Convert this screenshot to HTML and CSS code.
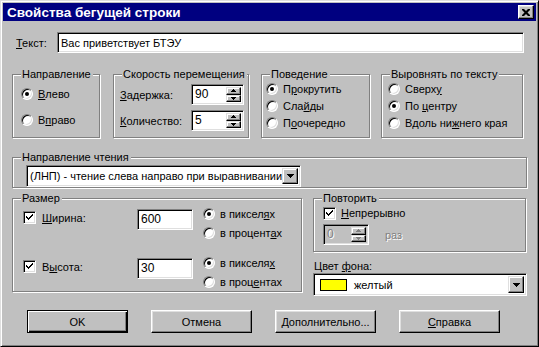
FILE: index.html
```html
<!DOCTYPE html>
<html lang="ru">
<head>
<meta charset="utf-8">
<title>Свойства бегущей строки</title>
<link rel="stylesheet" href="styles.css">
</head>
<body>
<div class="window">
  <div class="titlebar">
    <span class="title">Свойства бегущей строки</span>
    <span class="close-btn"><svg width="8" height="7" viewBox="0 0 8 7"><path d="M0 0h2l2 2 2-2h2v1l-2.5 2.5 2.5 2.5v1h-2l-2-2-2 2h-2v-1l2.5-2.5-2.5-2.5z" fill="#000"/></svg></span>
  </div>
  <div class="body">
    <div class="text-row">
      <span class="lbl"><u>Т</u>екст:</span>
      <div class="field text-field">Вас приветствует БТЭУ</div>
    </div>

    <div class="groups">
      <fieldset class="g g-dir">
        <legend>Направление</legend>
        <div class="inner">
          <div class="opt"><span class="radio on"></span><span><u>В</u>лево</span></div>
          <div class="opt"><span class="radio"></span><span>В<u>п</u>раво</span></div>
        </div>
      </fieldset>
      <fieldset class="g g-speed">
        <legend>Скорость перемещения</legend>
        <div class="inner">
          <div class="spin-row"><span class="spin-lbl"><u>З</u>адержка:</span>
            <div class="field spin"><span class="val">90</span><span class="spin-btns"><span class="sb"><svg class="arr" width="5" height="3" viewBox="0 0 5 3"><path d="M2 0h1v1h1v1h1v1h-5v-1h1v-1h1z"/></svg></span><span class="sb"><svg class="arr" width="5" height="3" viewBox="0 0 5 3"><path d="M0 0h5v1h-1v1h-1v1h-1v-1h-1v-1h-1z"/></svg></span></span></div>
          </div>
          <div class="spin-row"><span class="spin-lbl"><u>К</u>оличество:</span>
            <div class="field spin"><span class="val">5</span><span class="spin-btns"><span class="sb"><svg class="arr" width="5" height="3" viewBox="0 0 5 3"><path d="M2 0h1v1h1v1h1v1h-5v-1h1v-1h1z"/></svg></span><span class="sb"><svg class="arr" width="5" height="3" viewBox="0 0 5 3"><path d="M0 0h5v1h-1v1h-1v1h-1v-1h-1v-1h-1z"/></svg></span></span></div>
          </div>
        </div>
      </fieldset>
      <fieldset class="g g-beh">
        <legend>Поведение</legend>
        <div class="inner">
          <div class="opt"><span class="radio on"></span><span>П<u>р</u>окрутить</span></div>
          <div class="opt"><span class="radio"></span><span>Сла<u>й</u>ды</span></div>
          <div class="opt"><span class="radio"></span><span>П<u>о</u>очередно</span></div>
        </div>
      </fieldset>
      <fieldset class="g g-align">
        <legend>Выровнять по тексту</legend>
        <div class="inner">
          <div class="opt"><span class="radio"></span><span>Сверх<u>у</u></span></div>
          <div class="opt"><span class="radio on"></span><span>По <u>ц</u>ентру</span></div>
          <div class="opt"><span class="radio"></span><span>Вдоль ни<u>ж</u>него края</span></div>
        </div>
      </fieldset>
    </div>

    <fieldset class="g g-read">
      <legend>Направление чтения</legend>
      <div class="inner">
        <div class="field select read-select">
          <span class="sel-text">(ЛНП) - чтение слева направо при выравнивании</span>
          <span class="drop-btn"><svg width="7" height="4" viewBox="0 0 7 4"><path d="M0 0h7v1h-1v1h-1v1h-1v1h-1v-1h-1v-1h-1v-1h-1z"/></svg></span>
        </div>
      </div>
    </fieldset>

    <div class="lower">
      <fieldset class="g g-size">
        <legend>Размер</legend>
        <div class="inner">
          <div class="size-row">
            <div class="chk-lbl"><span class="check on"><svg width="7" height="7" viewBox="0 0 7 7"><path d="M0 2h1v1h1v1h1v-1h1v-1h1v-1h1v-1h1v2h-1v1h-1v1h-1v1h-1v1h-1v-1h-1v-1h-1z" fill="#000"/></svg></span><span><u>Ш</u>ирина:</span></div>
            <div class="field num">600</div>
            <div class="units">
              <div class="opt"><span class="radio on"></span><span>в пиксел<u>я</u>х</span></div>
              <div class="opt"><span class="radio"></span><span>в процент<u>а</u>х</span></div>
            </div>
          </div>
          <div class="size-row">
            <div class="chk-lbl"><span class="check on"><svg width="7" height="7" viewBox="0 0 7 7"><path d="M0 2h1v1h1v1h1v-1h1v-1h1v-1h1v-1h1v2h-1v1h-1v1h-1v1h-1v1h-1v-1h-1v-1h-1z" fill="#000"/></svg></span><span>В<u>ы</u>сота:</span></div>
            <div class="field num">30</div>
            <div class="units">
              <div class="opt"><span class="radio on"></span><span>в пикселя<u>х</u></span></div>
              <div class="opt"><span class="radio"></span><span>в проц<u>е</u>нтах</span></div>
            </div>
          </div>
        </div>
      </fieldset>
      <div class="right-col">
        <fieldset class="g g-repeat">
          <legend>Повторить</legend>
          <div class="inner">
            <div class="opt"><span class="check on"><svg width="7" height="7" viewBox="0 0 7 7"><path d="M0 2h1v1h1v1h1v-1h1v-1h1v-1h1v-1h1v2h-1v1h-1v1h-1v1h-1v1h-1v-1h-1v-1h-1z" fill="#000"/></svg></span><span><u>Н</u>епрерывно</span></div>
            <div class="rep-row">
              <div class="field spin disabled-field"><span class="val dis">0</span><span class="spin-btns"><span class="sb"><svg class="arr dis-arr" width="5" height="3" viewBox="0 0 5 3"><path d="M2 0h1v1h1v1h1v1h-5v-1h1v-1h1z"/></svg></span><span class="sb"><svg class="arr dis-arr" width="5" height="3" viewBox="0 0 5 3"><path d="M0 0h5v1h-1v1h-1v1h-1v-1h-1v-1h-1z"/></svg></span></span></div>
              <span class="dis">раз</span>
            </div>
          </div>
        </fieldset>
        <div class="color-lbl">Цвет <u>ф</u>она:</div>
        <div class="field select color-select">
          <span class="swatch"></span>
          <span class="sel-text">желтый</span>
          <span class="drop-btn"><svg width="7" height="4" viewBox="0 0 7 4"><path d="M0 0h7v1h-1v1h-1v1h-1v1h-1v-1h-1v-1h-1v-1h-1z"/></svg></span>
        </div>
      </div>
    </div>

    <div class="buttons">
      <span class="btn default">OK</span>
      <span class="btn">Отмена</span>
      <span class="btn"><u>Д</u>ополнительно...</span>
      <span class="btn"><u>С</u>правка</span>
    </div>
  </div>
</div>
</body>
</html>
```

FILE: styles.css
```css
* { box-sizing: border-box; }
html, body { margin: 0; padding: 0; background: #c0c0c0; }
body { font-family: "Liberation Sans", Arial, sans-serif; font-size: 11px; color: #000; }
u { text-decoration: underline; text-underline-offset: 1px; }
svg path { fill: #000; }

.window {
  width: 539px; height: 347px;
  background: #c0c0c0;
  border: 1px solid; border-color: #dfdfdf #000 #000 #dfdfdf;
  box-shadow: inset 1px 1px 0 #fff, inset -1px -1px 0 #808080;
  padding: 2px;
  display: flex; flex-direction: column;
}
.titlebar {
  height: 18px; background: #000080; color: #fff;
  display: flex; align-items: center; justify-content: space-between;
  padding: 0 2px 0 4px;
}
.title { font-weight: bold; font-size: 13.5px; }
.close-btn {
  width: 16px; height: 14px; background: #c0c0c0;
  border: 1px solid; border-color: #fff #000 #000 #fff;
  box-shadow: inset -1px -1px 0 #808080, inset 1px 1px 0 #dfdfdf;
  display: flex; align-items: center; justify-content: center;
}
.body { padding: 11px 9px 0 9px; display: flex; flex-direction: column; }

.field {
  background: #fff;
  border: 1px solid; border-color: #808080 #fff #fff #808080;
  box-shadow: inset 1px 1px 0 #000, inset -1px -1px 0 #dfdfdf;
}
.text-row { display: flex; align-items: center; height: 21px; }
.lbl { width: 45px; padding-left: 4px; }
.text-field { width: 467px; height: 21px; padding: 3px 3px; line-height: 14px; font-size: 11px; }

.g {
  margin: 0; padding: 0;
  border: 1px solid #808080;
  box-shadow: 1px 1px 0 #fff, inset 1px 1px 0 #fff;
  min-inline-size: 0;
}
.g legend {
  padding: 0 2px 0 1px; margin-left: 8px; line-height: 14px; background: #c0c0c0; white-space: nowrap;
}

.groups { display: flex; margin-top: 14px; height: 71px; }
.g-dir { width: 88px; }
.g-dir .inner { padding: 5px 0 0 8px; }
.g-speed { width: 136px; margin-left: 13px; }
.g-speed .inner { padding: 3px 0 0 6px; }
.g-beh { width: 109px; margin-left: 12px; }
.g-beh .inner { padding: 0 0 0 4px; }
.g-align { width: 142px; margin-left: 11px; }
.g-align .inner { padding: 0 0 0 6px; }

.opt { display: flex; align-items: center; height: 16px; gap: 5px; white-space: nowrap; }
.g-dir .opt + .opt { margin-top: 10px; }
.g-beh .opt + .opt, .g-align .opt + .opt { margin-top: 1px; }

.radio {
  width: 12px; height: 12px; border-radius: 50%; background: #fff; flex: none;
  border: 1px solid; border-color: #808080 #fff #fff #808080;
  box-shadow: inset 1px 1px 0 #000, inset -1px -1px 0 #dfdfdf;
  display: flex; align-items: center; justify-content: center;
}
.radio.on::after { content: ""; width: 4px; height: 4px; border-radius: 50%; background: #000; }

.check {
  width: 13px; height: 13px; background: #fff; flex: none;
  border: 1px solid; border-color: #808080 #fff #fff #808080;
  box-shadow: inset 1px 1px 0 #000, inset -1px -1px 0 #dfdfdf;
  display: flex; align-items: center; justify-content: center;
}

.spin-row { display: flex; align-items: center; height: 21px; }
.spin-row + .spin-row { margin-top: 5px; }
.spin-lbl { width: 71px; white-space: nowrap; }
.spin { width: 53px; height: 21px; display: flex; justify-content: space-between; padding: 2px; }
.spin .val { padding: 0 0 0 1px; line-height: 15px; font-size: 12px; }
.spin-btns { display: flex; flex-direction: column; width: 15px; }
.sb {
  flex: 1; background: #c0c0c0;
  border: 1px solid; border-color: #dfdfdf #000 #000 #dfdfdf;
  box-shadow: inset -1px -1px 0 #808080, inset 1px 1px 0 #fff;
  display: flex; align-items: center; justify-content: center;
}
.arr { display: block; }
.dis-arr path { fill: #808080; }

.g-read { margin-top: 12px; height: 38px; }
.g-read .inner { padding: 1px 0 0 13px; }
.select { display: flex; align-items: center; padding: 2px; }
.read-select { width: 275px; height: 22px; }
.sel-text { flex: 1; padding-left: 1px; white-space: nowrap; }
.drop-btn {
  width: 16px; height: 100%; background: #c0c0c0;
  border: 1px solid; border-color: #dfdfdf #000 #000 #dfdfdf;
  box-shadow: inset -1px -1px 0 #808080, inset 1px 1px 0 #fff;
  display: flex; align-items: center; justify-content: center;
}

.lower { display: flex; margin-top: 3px; gap: 11px; }
.g-size { width: 290px; height: 101px; }
.g-size .inner { padding: 1px 0 0 10px; }
.size-row { display: flex; align-items: flex-start; height: 35px; }
.size-row + .size-row { margin-top: 14px; }
.chk-lbl { display: flex; align-items: center; gap: 6px; width: 114px; margin-top: 5px; }
.num { width: 56px; height: 21px; margin-top: 3px; padding: 2px 3px; line-height: 15px; font-size: 12px; }
.units { margin-left: 10px; display: flex; flex-direction: column; gap: 3px; }

.right-col { display: flex; flex-direction: column; width: 214px; }
.g-repeat { width: 213px; height: 61px; }
.g-repeat .inner { padding: 0 0 0 9px; }
.g-repeat .opt { height: 16px; }
.rep-row { display: flex; align-items: center; gap: 16px; margin-top: 3px; }
.disabled-field { width: 46px; background: #c0c0c0; }
.dis { color: #808080; text-shadow: 1px 1px 0 #fff; }
.color-lbl { margin-top: 7px; line-height: 14px; padding-left: 1px; }
.color-select { width: 214px; height: 23px; margin-top: 0; }
.swatch { width: 27px; height: 12px; background: #ffff00; border: 1px solid #000; margin-left: 4px; }
.color-select .sel-text { padding-left: 7px; }

.buttons { display: flex; gap: 23px; padding-left: 15px; margin-top: 14px; }
.btn {
  width: 101px; height: 23px; display: flex; align-items: center; justify-content: center;
  border: 1px solid; border-color: #fff #000 #000 #fff;
  box-shadow: inset -1px -1px 0 #808080, inset 1px 1px 0 #dfdfdf;
}
.btn.default {
  border: 1px solid #000;
  box-shadow: inset 1px 1px 0 #fff, inset -1px -1px 0 #000, inset -2px -2px 0 #808080;
}
```
